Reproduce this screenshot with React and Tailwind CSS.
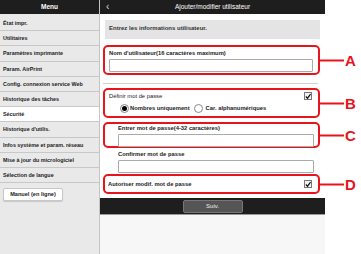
import React from 'react';

const menu = [
  'État impr.',
  'Utilitaires',
  'Paramètres imprimante',
  'Param. AirPrint',
  'Config. connexion service Web',
  'Historique des tâches',
  'Sécurité',
  "Historique d'utilis.",
  'Infos système et param. réseau',
  'Mise à jour du micrologiciel',
  'Sélection de langue',
];

function Tag({ letter }) {
  // annotation: red leader line + letter, hangs off the right edge of the red frame
  return (
    <div className="absolute left-full top-1/2 -translate-y-1/2 flex items-center">
      <div className="w-[26px] h-[2px] bg-[#e8141b]" />
      <span className="ml-[1px] text-[15px] leading-none font-bold text-[#e8141b]">{letter}</span>
    </div>
  );
}

function Check() {
  return (
    <div className="w-[8px] h-[8px] border border-[#777] bg-[#f2f2f2] flex items-center justify-center">
      <svg width="7" height="7" viewBox="0 0 7 7">
        <path d="M1 3.5 L3 5.5 L6.5 0.8" fill="none" stroke="#111" strokeWidth="1.4" />
      </svg>
    </div>
  );
}

function Field() {
  return <div className="h-[13px] bg-white border border-[#aaa] rounded-[1px]" />;
}

export default function App() {
  return (
    <div className="w-[361px] h-[254px] bg-white flex overflow-hidden text-[#222]" style={{ fontFamily: '"Liberation Sans", Arial, sans-serif' }}>
      {/* menu column */}
      <div className="w-[100px] flex flex-col bg-[#e9e9e9] border-r border-[#c4c4c4]">
        <div className="h-[14px] bg-[#1e1e1e] text-white text-[6.5px] font-bold flex items-center justify-center">Menu</div>
        <div className="pt-[2px]">
          {menu.map((m, i) => (
            <div
              key={m}
              className={`h-[15.2px] flex items-center pl-[3px] text-[5.4px] font-bold border-b border-[#c8c8c8] ${i === 6 ? 'bg-white' : ''}`}
            >
              {m}
            </div>
          ))}
        </div>
        <div className="mt-[5px] ml-[3px] w-[60px] h-[13px] bg-white border border-[#c8c8c8] rounded-[2px] shadow-[0_1px_1px_rgba(0,0,0,0.15)] flex items-center justify-center text-[5.6px] font-bold">
          Manuel (en ligne)
        </div>
      </div>

      {/* main panel */}
      <div className="w-[225px] flex flex-col bg-[#f7f7f8]">
        <div className="h-[14px] bg-[#1e1e1e] text-white relative flex items-center justify-center text-[6.5px]">
          <span className="absolute left-[6px] text-[10px] leading-none text-[#ddd]">‹</span>
          Ajouter/modifier utilisateur
        </div>

        <div className="bg-white flex flex-col pl-[3px] pr-[5px] pt-[6px]">
          <div className="ml-[2px] h-[19px] bg-[#e4e4e4] pl-[4px] pt-[4px] text-[6px] font-bold text-[#333]">
            Entrez les informations utilisateur.
          </div>

          {/* A */}
          <div className="relative mt-[6px] h-[30px] border-2 border-[#e8141b] rounded-[5px] px-[4px] pt-[3px] flex flex-col">
            <div className="text-[5.8px] font-bold leading-[7px]">Nom d'utilisateur(16 caractères maximum)</div>
            <div className="mt-[2px] mr-[1px]"><Field /></div>
            <Tag letter="A" />
          </div>

          <div className="mt-[8px] h-px bg-[#d0d0d0] mr-[2px]" />

          {/* B */}
          <div className="relative mt-[4px] h-[30px] border-2 border-[#e8141b] rounded-[5px] pl-[4px] pr-[6px] pt-[2px] flex flex-col">
            <div className="flex items-center justify-between">
              <span className="text-[5.8px] leading-[7px]">Définir mot de passe</span>
              <Check />
            </div>
            <div className="mt-[4px] pl-[11px] flex items-center text-[5.8px] font-bold">
              <span className="w-[9px] h-[9px] rounded-full border border-[#888] bg-white flex items-center justify-center">
                <span className="w-[5px] h-[5px] rounded-full bg-black" />
              </span>
              <span className="ml-[1px]">Nombres uniquement</span>
              <span className="ml-[4px] w-[9px] h-[9px] rounded-full border border-[#888] bg-white" />
              <span className="ml-[3px]">Car. alphanumériques</span>
            </div>
            <Tag letter="B" />
          </div>

          {/* C */}
          <div className="relative mt-[4px] h-[26px] border-2 border-[#e8141b] rounded-[5px] pl-[13px] pr-[4px] pt-[1px] flex flex-col">
            <div className="text-[5.8px] font-bold leading-[7px]">Entrer mot de passe(4-32 caractères)</div>
            <div className="mt-[2px]"><Field /></div>
            <Tag letter="C" />
          </div>

          <div className="pl-[15px] pr-[6px] pt-[3px] flex flex-col">
            <div className="text-[5.8px] font-bold leading-[7px]">Confirmer mot de passe</div>
            <div className="mt-[2px]"><Field /></div>
          </div>

          {/* D */}
          <div className="relative mt-[1px] h-[20px] border-2 border-[#e8141b] rounded-[5px] pl-[3px] pr-[6px] flex items-center justify-between">
            <span className="text-[5.8px] font-bold">Autoriser modif. mot de passe</span>
            <Check />
            <Tag letter="D" />
          </div>
          <div className="h-[4px]" />
        </div>

        <div className="h-[17px] bg-[#1e1e1e] border-b border-[#999] flex items-center justify-center">
          <div className="w-[60px] h-[13px] bg-[#555] border border-[#777] rounded-[2px] text-[6px] text-[#eee] flex items-center justify-center">
            Suiv.
          </div>
        </div>
        <div className="flex-1" />
      </div>
      <div className="flex-1" />
    </div>
  );
}
